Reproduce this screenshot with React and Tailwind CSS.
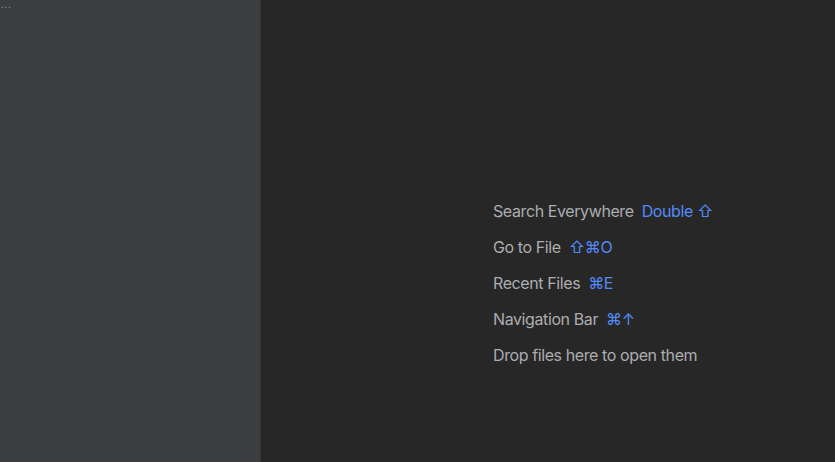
const rows = [
  { label: "Search Everywhere", keys: "Double ⇧" },
  { label: "Go to File", keys: "⇧⌘O" },
  { label: "Recent Files", keys: "⌘E" },
  { label: "Navigation Bar", keys: "⌘↑" },
  { label: "Drop files here to open them", keys: null },
]

export default function App() {
  return (
    <div className="flex h-[462px] w-[835px] overflow-hidden font-['Inter',sans-serif]">
      {/* Left — project tool window */}
      <div className="w-[261px] shrink-0 bg-[#3c3d40] border-r border-[#323335]">
        <div className="pl-[1px] text-[9px] leading-[10px] text-[#8c8d90] tracking-[1px]">...</div>
      </div>

      {/* Right — empty editor hints */}
      <div className="flex-1 bg-[#272727] pl-[232px] pt-[200px]">
        <div className="flex flex-col gap-[14px]">
          {rows.map((r) => (
            <div key={r.label} className="flex items-center gap-[8px] h-[22px] text-[16px] leading-[22px] tracking-[-0.4px]">
              <span className="text-[#acadaf]">{r.label}</span>
              {r.keys && <span className="text-[#548af7]">{r.keys}</span>}
            </div>
          ))}
        </div>
      </div>
    </div>
  )
}
